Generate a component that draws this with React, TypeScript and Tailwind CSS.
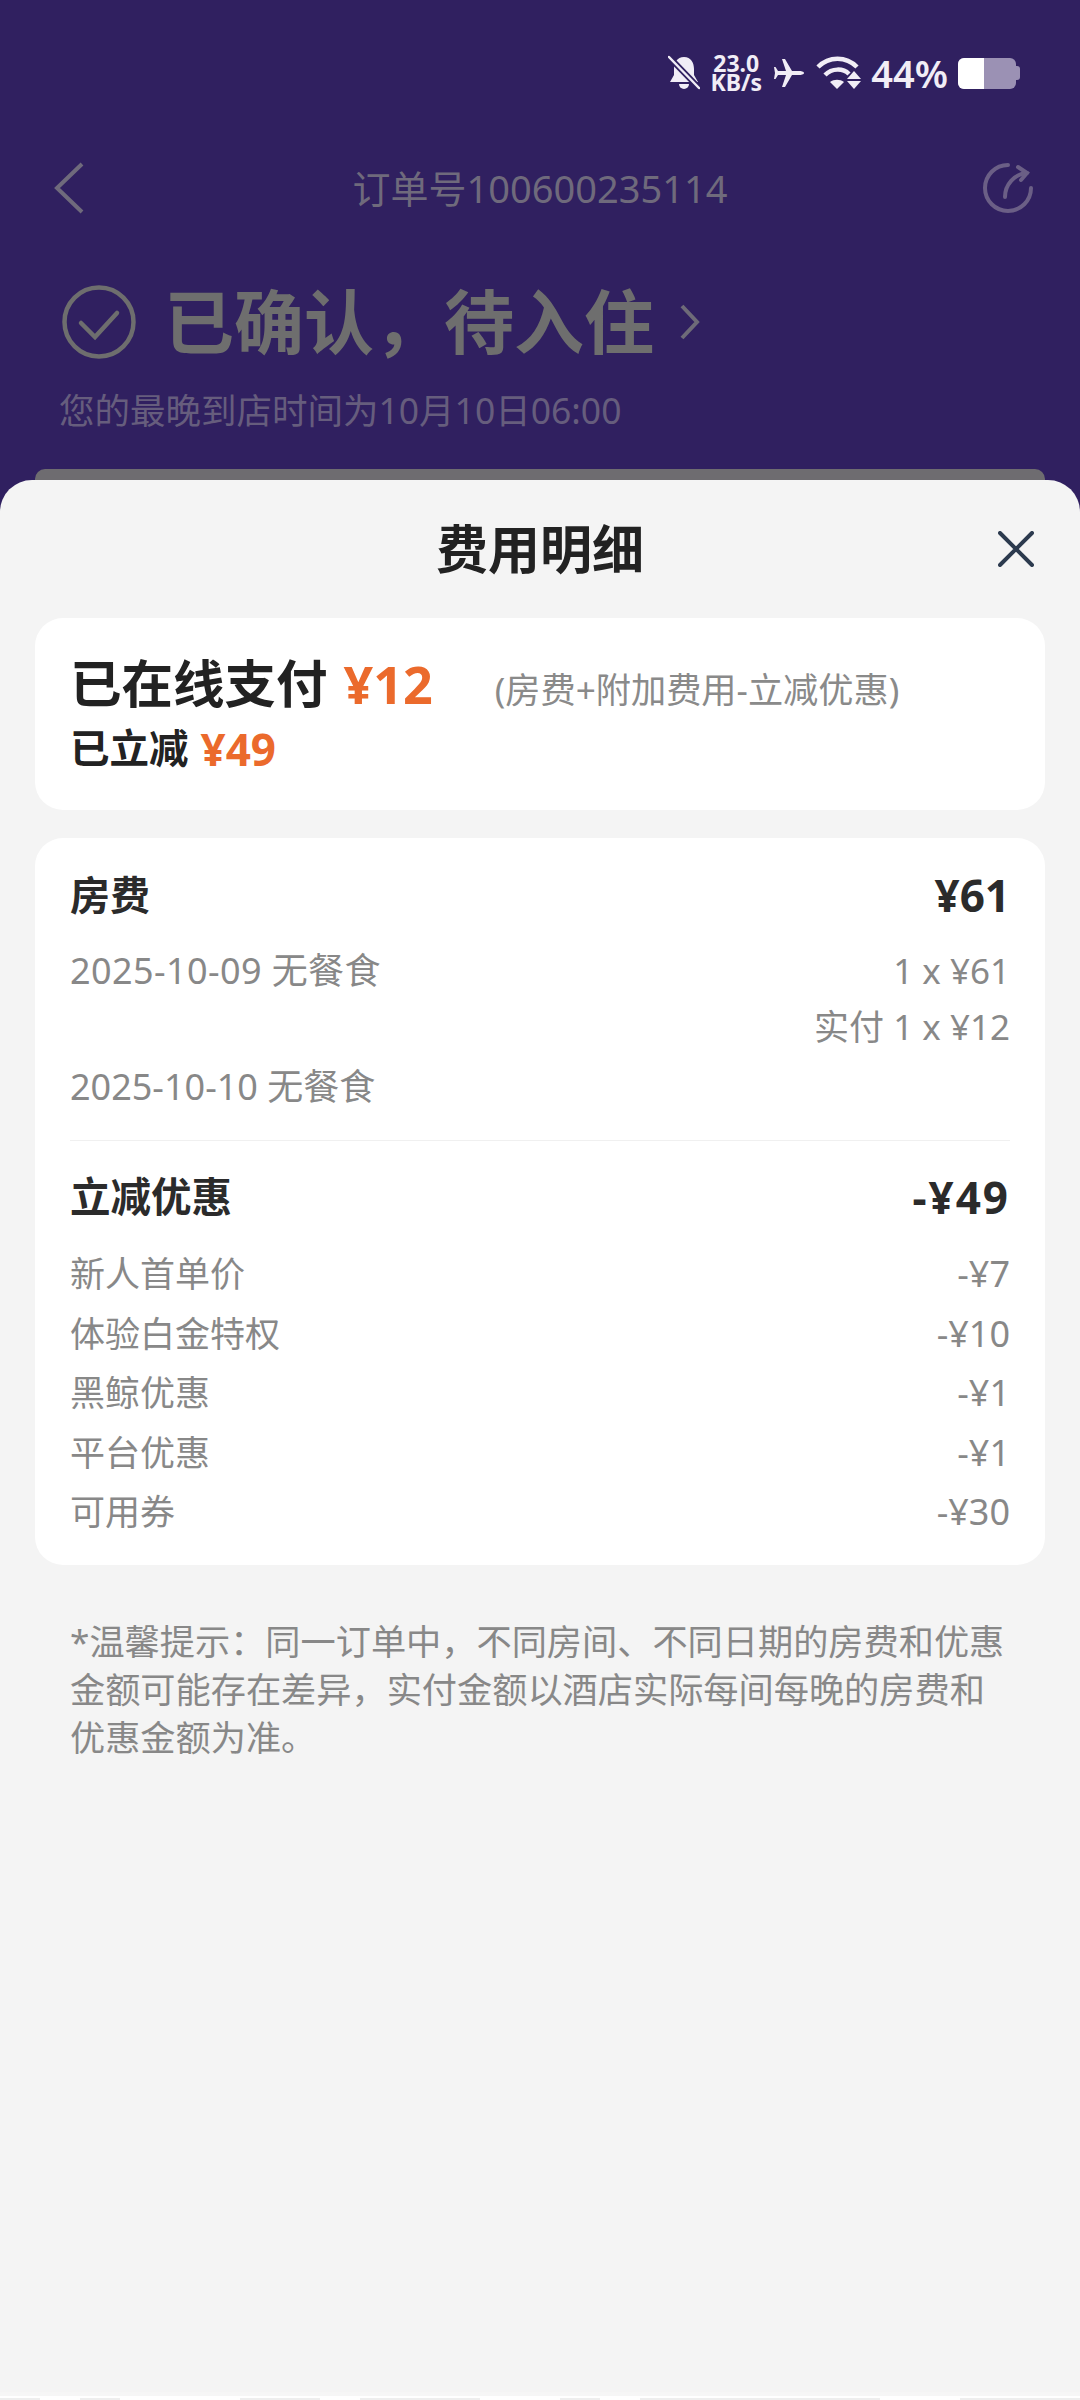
function StatusBar() {
  return (
    <div className="h-[146px] flex items-center justify-end pr-[60px] text-[#f1edf6]">
      <svg width="32" height="36" viewBox="0 0 32 36" className="mr-[10px]">
        <path d="M16 2C9 2 6 8 6 14v6l-4 7h28l-4-7v-6C26 8 23 2 16 2Z" fill="#f1edf6" />
        <path d="M11 29a5 5 0 0 0 10 0Z" fill="#f1edf6" />
        <path d="M1 2l30 31" stroke="#302060" strokeWidth="6" />
        <path d="M1 2l30 31" stroke="#f1edf6" strokeWidth="2.5" strokeLinecap="round" />
      </svg>
      <div className="w-[52px] mr-[12px] text-[23px] leading-[19px] font-bold text-center">
        <div>23.0</div>
        <div>KB/s</div>
      </div>
      <svg width="30" height="30" viewBox="0 0 30 30" className="mr-[12px]">
        <path
          d="M30 15c0-1.500-3-2-5-2h-7L11 1H8l4 12H4L1.500 9H0l1 6-1 6h1.500L4 17h8L8 29h3l7-12h7c2 0 5-.5 5-2Z"
          fill="#f1edf6"
        />
      </svg>
      <svg width="46" height="34" viewBox="0 0 46 34" className="mr-[9px]" fill="none">
        <path d="M2 11C13 0 30 0 41 11" stroke="#f1edf6" strokeWidth="4.500" />
        <path d="M9 19C16 12 27 12 33 18" stroke="#f1edf6" strokeWidth="4.500" />
        <path d="M14 26c4-3 10-3 14 0l-7 7Z" fill="#f1edf6" />
        <path d="M38 15l7 8H31Z" fill="#f1edf6" />
        <path d="M31 25h14l-7 8Z" fill="#f1edf6" />
      </svg>
      <span className="text-[38px] font-semibold leading-none mr-[10px]">44%</span>
      <div className="flex items-center">
        <div className="w-[58px] h-[31px] rounded-[6px] bg-[#9b91b4] overflow-hidden">
          <div className="w-[26px] h-full bg-white" />
        </div>
        <div className="w-[4px] h-[14px] rounded-r-[3px] bg-[#9b91b4]" />
      </div>
    </div>
  );
}

function OrderHeader() {
  return (
    <div>
      <div className="mt-[16px] h-[52px] px-[46px] grid grid-cols-[1fr_auto_1fr] items-center">
        <svg width="30" height="52" viewBox="0 0 30 52" className="ml-[8px]" fill="none">
          <path d="M28 2 3 26l25 24" stroke="#6f6a7c" strokeWidth="4" />
        </svg>
        <div className="text-[38px] leading-[52px] text-[#6f6a7c]">订单号100600235114</div>
        <svg width="52" height="52" viewBox="0 0 52 52" className="justify-self-end" fill="none" stroke="#6b5f86" strokeWidth="4" strokeLinecap="round">
          <path d="M26 3A23 23 0 1 0 49 26" />
          <path d="M23 35C23 23 32 12 45 11" />
          <path d="M36 5l9 6-6 7" />
        </svg>
      </div>
      <div className="mt-[70px] h-[76px] pl-[62px] flex items-center">
        <svg width="74" height="74" viewBox="0 0 74 74" fill="none" stroke="#6e6e6e" strokeWidth="4.500">
          <circle cx="37" cy="37" r="34.500" />
          <path d="M19 38l14 14 22-24" strokeLinecap="round" />
        </svg>
        <div className="ml-[28px] text-[70px] leading-[76px] font-bold text-[#6e6e6e]">已确认，待入住</div>
        <svg width="20" height="36" viewBox="0 0 20 36" className="ml-[26px]" fill="none">
          <path d="M2 2l15 16L2 34" stroke="#6e6b78" strokeWidth="4" />
        </svg>
      </div>
      <div className="mt-[26px] pl-[59px] text-[35.5px] leading-[48px] text-[#665d7d]">您的最晚到店时间为10月10日06:00</div>
      <div className="mt-[35px] mx-[35px] h-[11px] rounded-t-[10px] bg-[#6e6c70]" />
    </div>
  );
}

const discounts = [
  { label: "新人首单价", value: "-¥7" },
  { label: "体验白金特权", value: "-¥10" },
  { label: "黑鲸优惠", value: "-¥1" },
  { label: "平台优惠", value: "-¥1" },
  { label: "可用券", value: "-¥30" },
];

function BottomStrip() {
  const cells = [
    "w-[40px] bg-[#eeeeee]",
    "w-[40px]",
    "w-[40px] bg-[#eeeeee]",
    "w-[120px]",
    "w-[80px] bg-[#eeeeee]",
    "w-[40px]",
    "w-[120px] bg-[#eeeeee]",
    "w-[80px]",
    "w-[40px] bg-[#eeeeee]",
    "w-[40px]",
    "w-[240px] bg-[#eeeeee]",
    "w-[80px]",
    "w-[120px] bg-[#eeeeee]",
  ];
  return (
    <div className="mt-auto">
      <div className="h-[4px] bg-[#f6f6f6]" />
      <div className="h-[2px] bg-white" />
      <div className="h-[2px] flex bg-white">
        {cells.map((c, i) => (
          <div key={i} className={c} />
        ))}
      </div>
    </div>
  );
}

export default function App() {
  return (
    <div className="w-[1080px] h-[2400px] flex flex-col overflow-hidden bg-[#302060] font-['Noto_Sans','Noto_Sans_CJK_SC',sans-serif]">
      <StatusBar />
      <OrderHeader />
      <div className="flex-1 flex flex-col rounded-t-[32px] bg-[#f4f4f4]">
        <div className="h-[138px] px-[46px] grid grid-cols-[1fr_auto_1fr] items-center">
          <div />
          <div className="text-[52px] font-bold text-[#222222]">费用明细</div>
          <svg width="36" height="36" viewBox="0 0 36 36" className="justify-self-end" fill="none" stroke="#2c3a4e" strokeWidth="4" strokeLinecap="round">
            <path d="M2 2l32 32M34 2 2 34" />
          </svg>
        </div>

        <div className="mx-[35px] h-[192px] rounded-[28px] bg-white px-[35px] pt-[36px]">
          <div className="flex items-center h-[60px] text-[#222222]">
            <span className="text-[51.5px] font-bold">已在线支付</span>
            <span className="ml-[16px] text-[52px] font-bold text-[#eb6a2c]">¥12</span>
            <span className="ml-[62px] mt-[10px] text-[35.2px] font-normal text-[#8a8a8a]">(房费+附加费用-立减优惠)</span>
          </div>
          <div className="mt-[11px] flex items-center h-[48px] font-bold text-[#222222]">
            <span className="text-[39.5px]">已立减</span>
            <span className="ml-[12px] text-[44px] text-[#eb6a2c]">¥49</span>
          </div>
        </div>

        <div className="mt-[28px] mx-[35px] h-[727px] rounded-[28px] bg-white px-[35px] pt-[35px] text-[#888888] text-[36px]">
          <div className="flex justify-between items-center h-[44px] font-bold text-[#2b2b2b]">
            <span className="text-[40px]">房费</span>
            <span className="text-[44px]">¥61</span>
          </div>
          <div className="mt-[26px] flex justify-between leading-[56px]">
            <span className="tracking-[0.4px]">2025-10-09 无餐食</span>
            <span className="text-[35px]">1 x ¥61</span>
          </div>
          <div className="text-right text-[35px] leading-[56px]">实付 1 x ¥12</div>
          <div className="mt-[4px] leading-[56px]">2025-10-10 无餐食</div>
          <div className="mt-[25px] h-px bg-[#f0f0f0]" />
          <div className="mt-[34px] flex justify-between items-center h-[44px] font-bold text-[#2b2b2b]">
            <span className="text-[40.5px]">立减优惠</span>
            <span className="text-[44px] tracking-[2px]">-¥49</span>
          </div>
          <div className="mt-[24px]">
            {discounts.map((d) => (
              <div key={d.label} className="flex justify-between h-[59.5px] leading-[61px]">
                <span className="text-[35px]">{d.label}</span>
                <span>{d.value}</span>
              </div>
            ))}
          </div>
        </div>

        <div className="mt-[52px] pl-[70px] pr-[65px] text-[35.2px] leading-[48px] text-[#888888]">
          *温馨提示：同一订单中，不同房间、不同日期的房费和优惠金额可能存在差异，实付金额以酒店实际每间每晚的房费和优惠金额为准。
        </div>

        <BottomStrip />
      </div>
    </div>
  );
}
